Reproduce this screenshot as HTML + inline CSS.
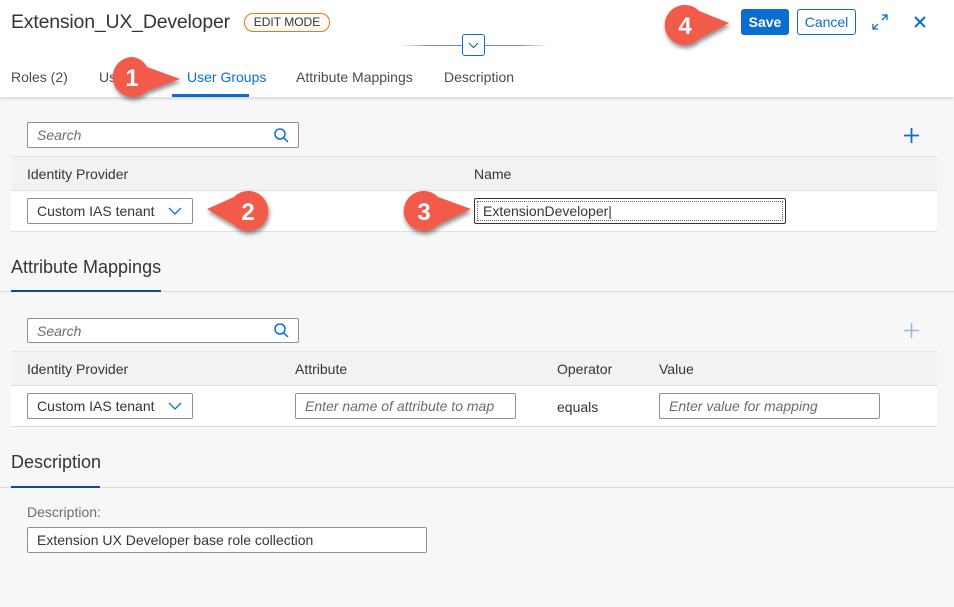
<!DOCTYPE html>
<html><head><style>
*{box-sizing:border-box;margin:0;padding:0}
body{width:954px;height:607px;background:#f7f7f7;font-family:"Liberation Sans",sans-serif;color:#32363a;position:relative;overflow:hidden;font-size:14px}
.a{position:absolute}
.inp{position:absolute;background:#fff;border:1px solid #89919a;border-radius:2px;font-size:14px;padding-left:9px;display:flex;align-items:center}
.ph{color:#6a6d70;font-style:italic}
.th{position:absolute;left:11px;width:926px;background:#f2f2f2;border-top:1px solid #e5e5e5;border-bottom:1px solid #e0e0e0}
.tr{position:absolute;left:11px;width:926px;background:#fff;border-bottom:1px solid #e0e0e0}
.lbl{position:absolute;font-size:14px;color:#32363a}
</style></head><body>
<div class="a" style="left:0;top:0;width:954px;height:97px;background:#fff;box-shadow:0 2px 3px rgba(0,0,0,.12)"></div>
<div class="a" style="left:11px;top:11px;font-size:19.5px;color:#32363a;letter-spacing:-0.2px">Extension_UX_Developer</div>
<div class="a" style="left:244px;top:13px;width:86px;height:19px;border:1px solid #e07a1f;border-radius:9px;background:#fffaf3;font-size:12px;text-align:center;line-height:17px;color:#32363a">EDIT MODE</div>
<div class="a" style="left:400px;top:45px;width:148px;height:1px;background:linear-gradient(90deg,rgba(10,110,209,0),#6a8bb5 20%,#6a8bb5 80%,rgba(10,110,209,0))"></div>
<div class="a" style="left:462px;top:34px;width:23px;height:22px;background:#fff;border:1px solid #0a6ed1;border-radius:3px"><svg width="21" height="20"><path d="M6 8l4.5 4.5L15 8" fill="none" stroke="#0a6ed1" stroke-width="1.2"/></svg></div>
<div class="a" style="left:11px;top:69px;font-size:14px;color:#4a4d50">Roles (2)</div>
<div class="a" style="left:99px;top:69px;font-size:14px;color:#4a4d50">Us</div>
<div class="a" style="left:187px;top:69px;font-size:14px;color:#0a6ed1">User Groups</div>
<div class="a" style="left:172px;top:94px;width:77px;height:3px;background:#0a6ed1"></div>
<div class="a" style="left:296px;top:69px;font-size:14px;color:#4a4d50">Attribute Mappings</div>
<div class="a" style="left:444px;top:69px;font-size:14px;color:#4a4d50">Description</div>
<div class="a" style="left:741px;top:9px;width:48px;height:26px;background:#0a6ed1;border-radius:3px;color:#fff;font-weight:bold;font-size:14px;text-align:center;line-height:26px">Save</div>
<div class="a" style="left:797px;top:9px;width:59px;height:26px;border:1px solid #0a6ed1;border-radius:3px;color:#0a6ed1;font-size:14px;text-align:center;line-height:24px;background:#fff">Cancel</div>
<svg class="a" style="left:871px;top:13px" width="18" height="18"><path d="M11 2h5v5M16 2l-5 5M7 16H2v-5M2 16l5-5" fill="none" stroke="#0a6ed1" stroke-width="1.3"/></svg>
<svg class="a" style="left:912px;top:14px" width="16" height="16"><path d="M3 3l10 10M13 3L3 13" stroke="#0a6ed1" stroke-width="2"/></svg>

<div class="inp" style="left:27px;top:122px;width:272px;height:26px"><span class="ph">Search</span><svg class="a" style="right:8px;top:4px" width="17" height="17"><circle cx="7" cy="7" r="5" fill="none" stroke="#0a6ed1" stroke-width="1.5"/><path d="M10.5 10.5l4.5 4.5" stroke="#0a6ed1" stroke-width="1.5"/></svg></div>
<svg class="a" style="left:903px;top:127px" width="17" height="17"><path d="M8.5 1v15M1 8.5h15" stroke="#0a6ed1" stroke-width="1.8"/></svg>
<div class="th" style="top:156px;height:35px"></div>
<div class="lbl" style="left:27px;top:166px">Identity Provider</div>
<div class="lbl" style="left:474px;top:166px">Name</div>
<div class="tr" style="top:191px;height:41px"></div>
<div class="inp" style="left:27px;top:198px;width:166px;height:26px">Custom IAS tenant<svg class="a" style="right:10px;top:7px" width="14" height="10"><path d="M1 2l6 6 6-6" fill="none" stroke="#0a6ed1" stroke-width="1.3"/></svg></div>
<div class="inp" style="left:474px;top:198px;width:312px;height:26px;border:1px solid #333;outline:1px dotted #666;outline-offset:-4px;padding-left:8px">ExtensionDeveloper|</div>

<div class="a" style="left:11px;top:257px;font-size:18px;color:#32363a">Attribute Mappings</div>
<div class="a" style="left:0;top:291px;width:954px;height:1px;background:#d9d9d9"></div>
<div class="a" style="left:11px;top:290px;width:150px;height:2px;background:#0a4f9a"></div>
<div class="inp" style="left:27px;top:318px;width:272px;height:25px"><span class="ph">Search</span><svg class="a" style="right:8px;top:3px" width="17" height="17"><circle cx="7" cy="7" r="5" fill="none" stroke="#0a6ed1" stroke-width="1.5"/><path d="M10.5 10.5l4.5 4.5" stroke="#0a6ed1" stroke-width="1.5"/></svg></div>
<svg class="a" style="left:903px;top:322px" width="17" height="17"><path d="M8.5 1v15M1 8.5h15" stroke="#98b8df" stroke-width="1.6"/></svg>
<div class="th" style="top:351px;height:35px"></div>
<div class="lbl" style="left:27px;top:361px">Identity Provider</div>
<div class="lbl" style="left:295px;top:361px">Attribute</div>
<div class="lbl" style="left:557px;top:361px">Operator</div>
<div class="lbl" style="left:659px;top:361px">Value</div>
<div class="tr" style="top:386px;height:41px"></div>
<div class="inp" style="left:27px;top:393px;width:166px;height:26px">Custom IAS tenant<svg class="a" style="right:10px;top:7px" width="14" height="10"><path d="M1 2l6 6 6-6" fill="none" stroke="#0a6ed1" stroke-width="1.3"/></svg></div>
<div class="inp" style="left:295px;top:393px;width:221px;height:26px"><span class="ph">Enter name of attribute to map</span></div>
<div class="lbl" style="left:557px;top:399px">equals</div>
<div class="inp" style="left:659px;top:393px;width:221px;height:26px"><span class="ph">Enter value for mapping</span></div>

<div class="a" style="left:11px;top:452px;font-size:18px;color:#32363a">Description</div>
<div class="a" style="left:0;top:487px;width:954px;height:1px;background:#d9d9d9"></div>
<div class="a" style="left:11px;top:486px;width:89px;height:2px;background:#0a4f9a"></div>
<div class="a" style="left:27px;top:504px;font-size:14px;color:#6a6d70">Description:</div>
<div class="inp" style="left:27px;top:527px;width:400px;height:26px">Extension UX Developer base role collection</div>

<svg class="a" style="left:0;top:0" width="954" height="607">
<defs><filter id="s" x="-50%" y="-50%" width="200%" height="200%"><feDropShadow dx="1" dy="3" stdDeviation="2" flood-opacity=".45"/></filter></defs>
<g fill="#f25a48" filter="url(#s)">
<path d="M133 57a20 20 0 1 0 14 34l33 -12l-33 -12a20 20 0 0 0 -14 -10z"/>
<path d="M248 191a20 20 0 1 1 -14 34l-27 -16l27 -12a20 20 0 0 1 14 -6z"/>
<path d="M424 191a20 20 0 1 0 14 34l33 -16l-33 -12a20 20 0 0 0 -14 -6z"/>
<path d="M685 5a20 20 0 1 0 14 34l30 -16l-30 -12a20 20 0 0 0 -14 -6z"/>
</g>
<g fill="#fff" font-family="Liberation Sans,sans-serif" font-weight="bold" font-size="24" text-anchor="middle">
<text x="132" y="86">1</text><text x="248" y="220">2</text><text x="424" y="220">3</text><text x="685" y="34">4</text>
</g>
</svg>
</body></html>
